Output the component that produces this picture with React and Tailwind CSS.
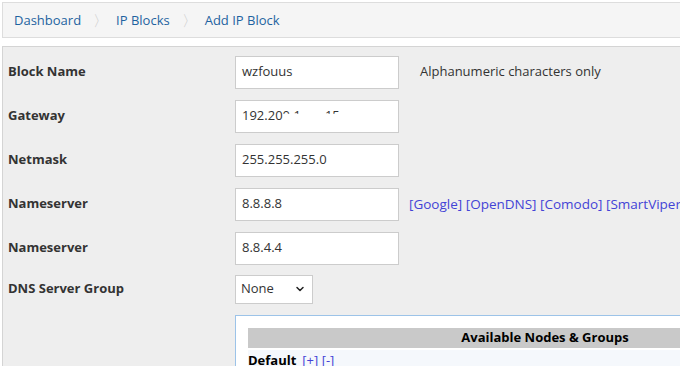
import React from 'react';
import { ChevronDown } from 'lucide-react';

const font = { fontFamily: '"Open Sans", "Noto Sans", sans-serif' };

function Row({ label, children, extra, h = 'h-[44px]' }) {
  return (
    <div className={`flex items-center ${h}`}>
      <div className="w-[232px] pl-[5px] text-[13px] font-bold text-[#333]">{label}</div>
      {children}
      {extra}
    </div>
  );
}

function TextInput({ value }) {
  return (
    <div className="w-[164px] h-[33px] bg-white border border-[#ccc] flex items-center px-[6px] text-[13px] text-[#333] whitespace-nowrap">
      {value}
    </div>
  );
}

export default function App() {
  return (
    <div className="w-[680px] h-[366px] overflow-hidden bg-white" style={font}>
      {/* Breadcrumb */}
      <div className="ml-[2px] mt-[2px] w-[700px] h-[36px] bg-[#f5f5f5] border border-[#ddd] flex items-center pl-[11px] pt-[1px] text-[13px] text-[#1e63a0]">
        <span>Dashboard</span>
        <span className="ml-[12px] mr-[8px] text-[#ccc] text-[15px] font-light">〉</span>
        <span>IP Blocks</span>
        <span className="ml-[12px] mr-[8px] text-[#ccc] text-[15px] font-light">〉</span>
        <span>Add IP Block</span>
      </div>

      {/* Panel */}
      <div className="ml-[2px] mt-[8px] w-[700px] h-[400px] bg-[#eeeeee] border-l border-t border-[#d4d4d4] pt-[3px]">
        <Row label="Block Name" extra={<span className="ml-[21px] text-[13px] text-[#333]">Alphanumeric characters only</span>}>
          <TextInput value="wzfouus" />
        </Row>
        <Row label="Gateway">
          <TextInput
            value={
              <>
                192.20
                <span className="[clip-path:inset(0_0_62%_0)]">0.1</span>
                <span className="inline-block w-[24px]" />
                <span className="[clip-path:inset(0_0_62%_0)]">15</span>
              </>
            }
          />
        </Row>
        <Row label="Netmask">
          <TextInput value="255.255.255.0" />
        </Row>
        <Row
          label="Nameserver"
          extra={
            <span className="ml-[10px] text-[13.5px] text-[#4343d6] whitespace-nowrap">
              [Google] [OpenDNS] [Comodo] [SmartViper]
            </span>
          }
        >
          <TextInput value="8.8.8.8" />
        </Row>
        <Row label="Nameserver">
          <TextInput value="8.8.4.4" />
        </Row>
        <Row label="DNS Server Group" h="h-[38px]">
          <div className="w-[78px] h-[29px] bg-white border border-[#ccc] flex items-center justify-between pl-[5px] pr-[6px] text-[13px] text-[#333]">
            <span>None</span>
            <ChevronDown size={12} strokeWidth={3} className="text-[#222]" />
          </div>
        </Row>

        {/* Nodes box */}
        <div className="ml-[232px] mt-[7px] w-[520px] h-[80px] bg-white border border-[#9cc3e8] pt-[12px] pl-[12px]">
          <div className="w-[594px] h-[20px] bg-[#c9c9c9] flex items-center justify-center text-[13px] font-bold text-black">
            Available Nodes &amp; Groups
          </div>
          <div className="w-[594px] h-[24px] mt-[2px] bg-[#f5f8fc] flex items-start pt-[1px] text-[13px]">
            <span className="font-bold text-black">Default</span>
            <span className="ml-[6px] text-[#4343d6]">[+] [-]</span>
          </div>
        </div>
      </div>
    </div>
  );
}
